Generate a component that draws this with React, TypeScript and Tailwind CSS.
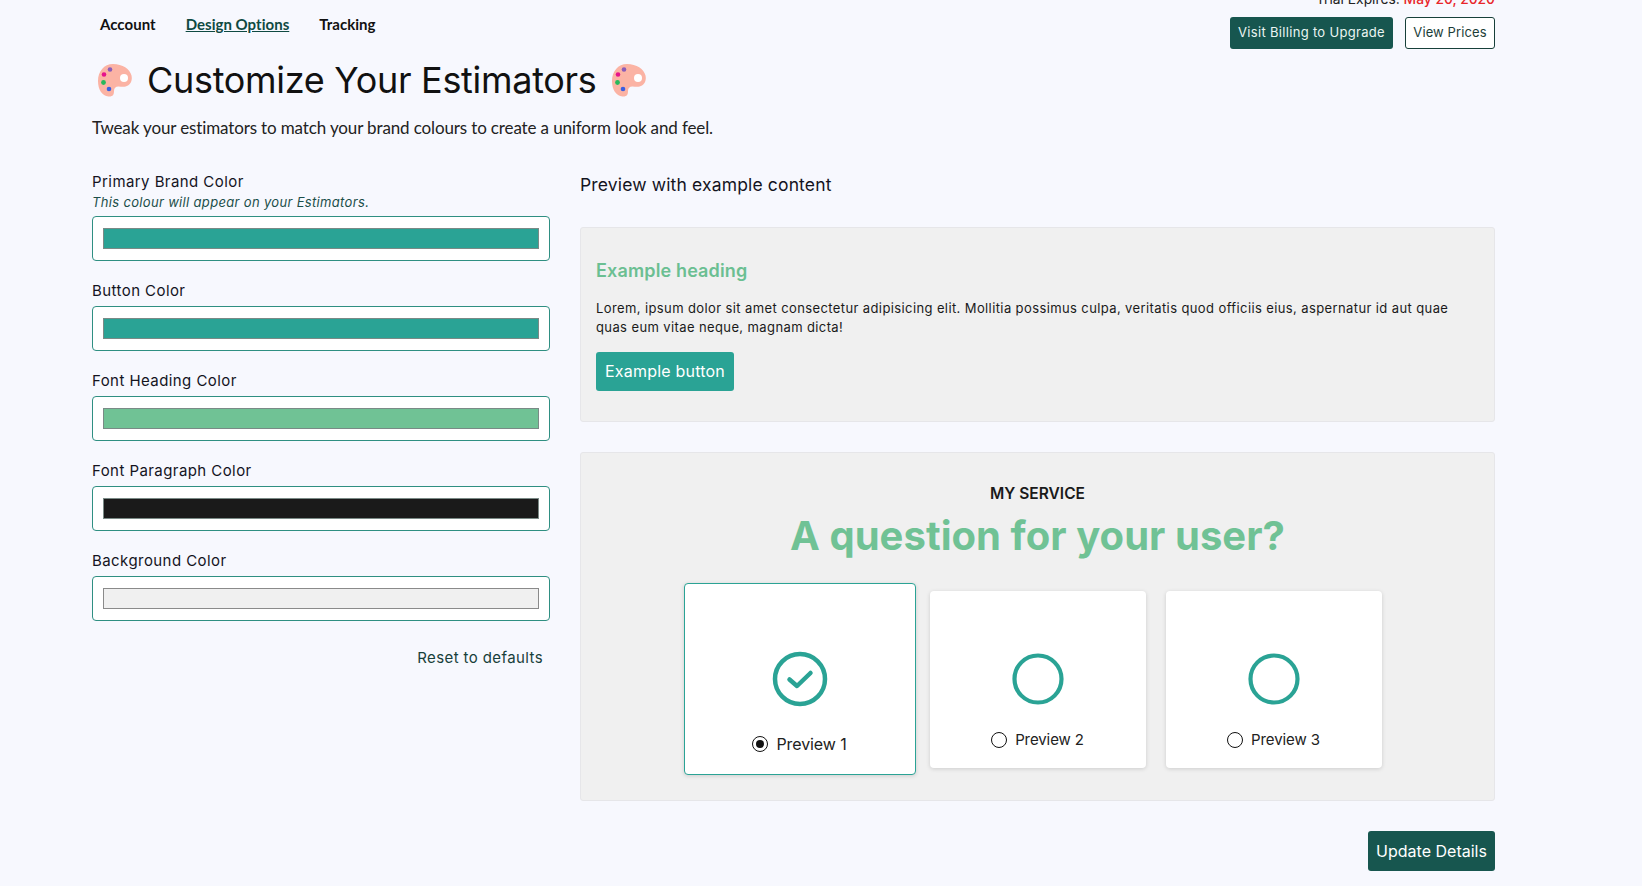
import React from "react";

const poppins = "font-['Inter',sans-serif]";

const Palette = () => (
  <svg width="36" height="34" viewBox="0 0 36 34" className="shrink-0">
    <path
      d="M16 1C7 1 1 8.500 1 18c0 8.500 4 15 10.500 15.500 4.500.3 5.500-2 5.500-5.500 0-3 1.500-4.500 4.500-4.500 3 0 6.500 1 9.500-1 3-2 4.500-5.500 3.500-10C33 6 25.500 1 16 1Z"
      fill="#fbb3a4"
    />
    <circle cx="27" cy="15" r="4" fill="#ffffff" />
    <circle cx="13" cy="6.500" r="2.300" fill="#8a5cb8" />
    <circle cx="7" cy="11.500" r="2.300" fill="#e6128c" />
    <circle cx="6.500" cy="19.500" r="2.400" fill="#27b85a" />
    <circle cx="12" cy="26" r="2.300" fill="#3b5fe0" />
  </svg>
);

const Field = ({ label, hint, color, pale }: { label: string; hint?: string; color: string; pale?: boolean }) => (
  <div className="flex flex-col">
    <label className={`${poppins} text-[15px] leading-[22px] text-[#14141e] tracking-[0.43px]`}>{label}</label>
    {hint && <span className={`${poppins} text-[13px] italic leading-[18px] tracking-[0.33px] text-[#1c4f4a] mb-[5px]`}>{hint}</span>}
    {!hint && <div className="h-[4px]" />}
    <div className="h-[45px] bg-white border border-[#2f8f82] rounded-[4px] px-[10px] py-[11px]">
      <div
        className={`h-[21px] w-full border ${pale ? "border-[#8a8a8a]" : "border-[#7a8a86]"}`}
        style={{ backgroundColor: color }}
      />
    </div>
  </div>
);

const Option = ({ label, active, className }: { label: string; active?: boolean; className?: string }) => (
  <div
    className={`flex flex-col items-center bg-white rounded-[4px] ${className ?? ""} ${
      active
        ? "w-[232px] h-[192px] border border-[#2aa395] shadow-[0_1px_4px_rgba(0,0,0,0.15)] pt-[67px]"
        : "w-[216px] h-[177px] shadow-[0_1px_4px_rgba(0,0,0,0.15)] pt-[62px]"
    }`}
  >
    {active ? (
      <svg width="56" height="56" viewBox="0 0 56 56" fill="none">
        <circle cx="28" cy="28" r="25" stroke="#2aa395" strokeWidth="4.500" />
        <path d="M17.500 28.500l7.500 6.500 13.500-13" stroke="#2aa395" strokeWidth="4.500" strokeLinecap="round" strokeLinejoin="round" />
      </svg>
    ) : (
      <svg width="52" height="52" viewBox="0 0 52 52" fill="none">
        <circle cx="26" cy="26" r="23.500" stroke="#2aa395" strokeWidth="4.200" />
      </svg>
    )}
    <div className={`flex items-center gap-[8px] ${active ? "mt-[26px]" : "mt-[24px]"}`}>
      <span className="w-[16px] h-[16px] rounded-full border-[1.500px] border-[#111] flex items-center justify-center">
        {active && <span className="w-[8px] h-[8px] rounded-full bg-[#111]" />}
      </span>
      <span className={`${poppins} ${active ? "text-[16px]" : "text-[15px]"} leading-[22px] tracking-[-0.1px] text-[#222]`}>{label}</span>
    </div>
  </div>
);

export default function App() {
  return (
    <div className="h-[886px] overflow-hidden bg-[#f7f8fe]">
      <div className="w-[1403px] ml-[92px] -mt-[9px]">
        {/* Top row */}
        <div className="flex justify-between items-start">
          <div className="flex gap-[30px] pl-[8px] pt-[22px] font-['Lato',sans-serif] font-bold text-[15px] leading-[22px] tracking-[0.03px] text-[#111]">
            <span>Account</span>
            <span className="underline text-[#0f4a42]">Design Options</span>
            <span>Tracking</span>
          </div>
          <div className="flex flex-col items-end">
            <div className={`${poppins} text-[13.800px] leading-[20px] text-[#222] -mt-[2px]`}>
              Trial Expires: <span className="text-[#e8262a] font-medium">May 20, 2020</span>
            </div>
            <div className="flex gap-[12px] mt-[8px]">
              <button className={`${poppins} h-[32px] w-[163px] rounded-[3px] bg-[#17564f] text-[#eaf5f2] text-[13px] tracking-[0.32px]`}>
                Visit Billing to Upgrade
              </button>
              <button className={`${poppins} h-[32px] w-[90px] rounded-[3px] bg-white border border-[#17403a] text-[#1b3d38] text-[13px] tracking-[0.1px]`}>
                View Prices
              </button>
            </div>
          </div>
        </div>

        {/* Title */}
        <div className="flex items-center gap-[14px] pl-[5px] mt-[4px] h-[54px]">
          <Palette />
          <h1 className={`${poppins} text-[36px] leading-[46px] text-[#111] tracking-[-0.3px]`}>Customize Your Estimators</h1>
          <Palette />
        </div>
        <p className="font-['Lato',sans-serif] text-[17px] leading-[26px] tracking-[-0.13px] text-[#222] mt-[8px]">
          Tweak your estimators to match your brand colours to create a uniform look and feel.
        </p>

        {/* Body */}
        <div className="flex gap-[30px] mt-[30px]">
          <div className="w-[458px] shrink-0 flex flex-col">
            <div className="flex flex-col gap-[19px]">
              <Field label="Primary Brand Color" hint="This colour will appear on your Estimators." color="#2aa395" />
              <Field label="Button Color" color="#2aa395" />
              <Field label="Font Heading Color" color="#70c295" />
              <Field label="Font Paragraph Color" color="#1a1a1a" />
              <Field label="Background Color" color="#f0f0f0" pale />
            </div>
            <div className={`${poppins} text-right pr-[7px] mt-[27px] text-[15px] leading-[20px] tracking-[0.4px] text-[#17403a]`}>Reset to defaults</div>
          </div>

          <div className="flex-1 flex flex-col">
            <div className={`${poppins} text-[17.500px] leading-[26px] tracking-[0.15px] text-[#14141e] mt-[1px]`}>Preview with example content</div>

            <div className="mt-[29px] h-[195px] bg-[#f0f0f0] border border-[#e6e6e9] rounded-[3px] pl-[15px] pr-[40px] pt-[31px]">
              <h3 className="font-['Inter',sans-serif] font-semibold text-[18px] leading-[24px] tracking-[0.15px] text-[#6bbf92]">Example heading</h3>
              <p className="font-['Inter',sans-serif] text-[13px] leading-[19px] tracking-[0.39px] text-[#1a1a1a] mt-[16px]">
                Lorem, ipsum dolor sit amet consectetur adipisicing elit. Mollitia possimus culpa, veritatis quod officiis eius, aspernatur id aut quae quas eum vitae neque, magnam dicta!
              </p>
              <button className="font-['Inter',sans-serif] w-[138px] h-[39px] mt-[15px] pb-[2px] rounded-[3px] bg-[#2aa395] text-white text-[16px] tracking-[0.2px]">
                Example button
              </button>
            </div>

            <div className="mt-[30px] h-[349px] bg-[#f0f0f0] border border-[#e6e6e9] rounded-[3px] flex flex-col items-center pt-[31px]">
              <div className="font-['Inter',sans-serif] font-semibold text-[15.500px] leading-[20px] text-[#1a1a1a]">MY SERVICE</div>
              <h2 className="font-['Inter',sans-serif] font-bold text-[40px] leading-[46px] tracking-[0.05px] text-[#70c295] mt-[9px]">A question for your user?</h2>
              <div className="flex items-center mt-[24px] -ml-[10px]">
                <Option label="Preview 1" active />
                <Option label="Preview 2" className="ml-[14px]" />
                <Option label="Preview 3" className="ml-[20px]" />
              </div>
            </div>

            <div className="flex justify-end mt-[30px]">
              <button className={`${poppins} w-[127px] h-[40px] rounded-[3px] bg-[#17564f] text-white text-[16px]`}>
                Update Details
              </button>
            </div>
          </div>
        </div>
      </div>
    </div>
  );
}
